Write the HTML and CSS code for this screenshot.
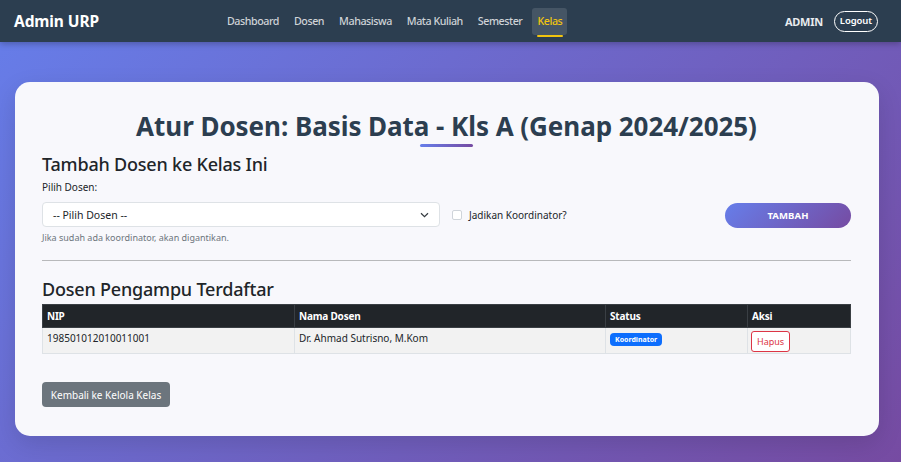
FILE: index.html
```html
<!DOCTYPE html>
<html lang="id">
<head>
<meta charset="utf-8">
<title>Atur Dosen</title>
<link rel="stylesheet" href="styles.css">
</head>
<body>
<nav class="navbar">
  <div class="brand">Admin URP</div>
  <ul class="nav-links">
    <li><a href="#">Dashboard</a></li>
    <li><a href="#">Dosen</a></li>
    <li><a href="#">Mahasiswa</a></li>
    <li><a href="#">Mata Kuliah</a></li>
    <li><a href="#">Semester</a></li>
    <li><a href="#" class="active">Kelas</a></li>
  </ul>
  <div class="nav-right">
    <span class="user">ADMIN</span>
    <a href="#" class="logout">Logout</a>
  </div>
</nav>

<main class="page">
  <section class="card">
    <h1 class="title">Atur Dosen: Basis Data - Kls A (Genap 2024/2025)</h1>

    <h3 class="section-title first">Tambah Dosen ke Kelas Ini</h3>
    <form class="add-form">
      <label class="label" for="dosen">Pilih Dosen:</label>
      <div class="form-row">
        <div class="select-group">
          <div class="select">
            <span>-- Pilih Dosen --</span>
            <svg width="9" height="6" viewBox="0 0 9 6"><path d="M1 1.2 L4.5 4.6 L8 1.2" fill="none" stroke="#343a40" stroke-width="1.2"/></svg>
          </div>
          <div class="hint">Jika sudah ada koordinator, akan digantikan.</div>
        </div>
        <label class="check">
          <span class="box"></span>
          <span>Jadikan Koordinator?</span>
        </label>
        <button type="button" class="btn-add">TAMBAH</button>
      </div>
    </form>

    <hr class="divider">

    <h3 class="section-title">Dosen Pengampu Terdaftar</h3>
    <table class="table">
      <thead>
        <tr>
          <th class="c-nip">NIP</th>
          <th class="c-nama">Nama Dosen</th>
          <th class="c-status">Status</th>
          <th class="c-aksi">Aksi</th>
        </tr>
      </thead>
      <tbody>
        <tr>
          <td>198501012010011001</td>
          <td>Dr. Ahmad Sutrisno, M.Kom</td>
          <td><span class="badge">Koordinator</span></td>
          <td><button type="button" class="btn-del">Hapus</button></td>
        </tr>
      </tbody>
    </table>

    <button type="button" class="btn-back">Kembali ke Kelola Kelas</button>
  </section>
</main>
</body>
</html>
```

FILE: styles.css
```css
* { box-sizing: border-box; }

html, body {
  margin: 0;
  padding: 0;
  height: 100%;
}

body {
  font-family: "Noto Sans", "Open Sans", sans-serif;
  color: #212529;
  background: linear-gradient(135deg, #667eea 0%, #764ba2 100%);
  min-height: 462px;
  overflow: hidden;
}

.navbar {
  height: 42px;
  background: #2c3e50;
  display: flex;
  align-items: center;
  padding: 0 23px 0 14px;
  box-shadow: 0 2px 6px rgba(0,0,0,0.25);
}

.brand {
  color: #fff;
  font-weight: 700;
  font-size: 15.5px;
  letter-spacing: -0.1px;
}

.nav-links {
  list-style: none;
  margin: 0 0 0 123px;
  padding: 0;
  display: flex;
  gap: 5px;
  height: 42px;
  align-items: center;
}

.nav-links a {
  display: block;
  position: relative;
  color: rgba(255,255,255,0.78);
  text-decoration: none;
  font-size: 10.7px;
  font-weight: 500;
  padding: 0 5px;
  height: 27px;
  line-height: 27px;
  border-radius: 3px;
  letter-spacing: -0.45px;
}

.nav-links a.active {
  color: #f1c40f;
  background: rgba(255,255,255,0.12);
}

.nav-links a.active::after {
  content: "";
  position: absolute;
  left: 5px;
  right: 4px;
  bottom: -2px;
  height: 2px;
  background: #f1c40f;
  border-radius: 1px;
}

.nav-right {
  margin-left: auto;
  display: flex;
  align-items: center;
  gap: 11px;
}

.user {
  color: #e8ebee;
  font-size: 11px;
  font-weight: 700;
  letter-spacing: -0.3px;
}

.logout {
  color: #fff;
  text-decoration: none;
  font-size: 9.5px;
  font-weight: 600;
  border: 1.5px solid #fff;
  border-radius: 11px;
  height: 21px;
  line-height: 18px;
  padding: 0 5px;
  letter-spacing: -0.1px;
}

.page {
  padding: 40px 22px 0 15px;
}

.card {
  background: #f8f8fc;
  border-radius: 15px;
  padding: 26px 28px 29px 27px;
  box-shadow: 0 8px 24px rgba(0,0,0,0.12);
}

.title {
  margin: 0;
  text-align: center;
  font-size: 26px;
  line-height: 36px;
  font-weight: 700;
  color: #2c3e50;
  letter-spacing: -0.05px;
  position: relative;
}

.title::after {
  content: "";
  display: block;
  width: 53px;
  height: 3px;
  margin: 0 auto;
  border-radius: 2px;
  background: linear-gradient(90deg, #667eea, #764ba2);
}

.section-title {
  margin: 16px 0 0;
  font-size: 18px;
  font-weight: 500;
  line-height: 24px;
  color: #212529;
  letter-spacing: -0.2px;
}

.section-title.first {
  margin-top: 5px;
}

.add-form {
  margin: 0;
}

.label {
  display: block;
  margin-top: 3px;
  font-size: 10px;
  line-height: 16px;
  color: #212529;
}

.form-row {
  display: flex;
  align-items: flex-start;
  margin-top: 7px;
}

.select-group {
  width: 398px;
}

.select {
  height: 25px;
  border: 1px solid #dee2e6;
  border-radius: 4px;
  background: #fff;
  display: flex;
  align-items: center;
  justify-content: space-between;
  padding: 0 10px 0 10px;
  font-size: 10.5px;
  color: #212529;
}

.hint {
  margin-top: 5px;
  font-size: 9px;
  line-height: 12px;
  color: #6c757d;
}

.check {
  display: flex;
  align-items: center;
  gap: 7px;
  margin: 6px 0 0 12px;
  font-size: 10px;
  color: #212529;
}

.box {
  width: 10px;
  height: 10px;
  border: 1px solid #cfd4da;
  border-radius: 2px;
  background: #fff;
}

.btn-add {
  margin: 1px 0 0 auto;
  width: 126px;
  height: 25px;
  border: none;
  border-radius: 13px;
  background: linear-gradient(135deg, #667eea, #764ba2);
  color: #fff;
  font-family: inherit;
  font-size: 9.5px;
  font-weight: 700;
  letter-spacing: 0.1px;
}

.divider {
  margin: 16px 0 0;
  border: 0;
  border-top: 1px solid #b8b9bb;
}

.table {
  margin-top: 3px;
  width: 100%;
  border-collapse: collapse;
  font-size: 10px;
}

.table th {
  background: #212529;
  color: #fff;
  text-align: left;
  font-weight: 700;
  height: 23px;
  padding: 0 4px;
  border: 1px solid #3a3f44;
  letter-spacing: -0.2px;
}

.table td {
  background: #f2f2f2;
  border: 1px solid #dee2e6;
  padding: 3px 4px 2px;
  vertical-align: top;
  height: 26px;
  line-height: 14px;
}

.c-nip { width: 252px; }
.c-nama { width: 311px; }
.c-status { width: 142px; }

.badge {
  display: inline-block;
  background: #0d6efd;
  color: #fff;
  font-size: 7px;
  font-weight: 700;
  line-height: 13px;
  height: 13px;
  padding: 0 5px;
  border-radius: 4px;
  margin-top: 2px;
}

.btn-del {
  display: block;
  margin: 0 0 -1px -1px;
  height: 21px;
  padding: 0 5px;
  border: 1px solid #dc3545;
  border-radius: 3px;
  background: #fff;
  color: #dc3545;
  font-family: inherit;
  font-size: 9px;
}

.btn-back {
  margin-top: 28px;
  height: 25px;
  width: 128px;
  border: none;
  border-radius: 4px;
  background: #6c757d;
  color: #fff;
  font-family: inherit;
  font-size: 10px;
  padding: 0;
}
```
